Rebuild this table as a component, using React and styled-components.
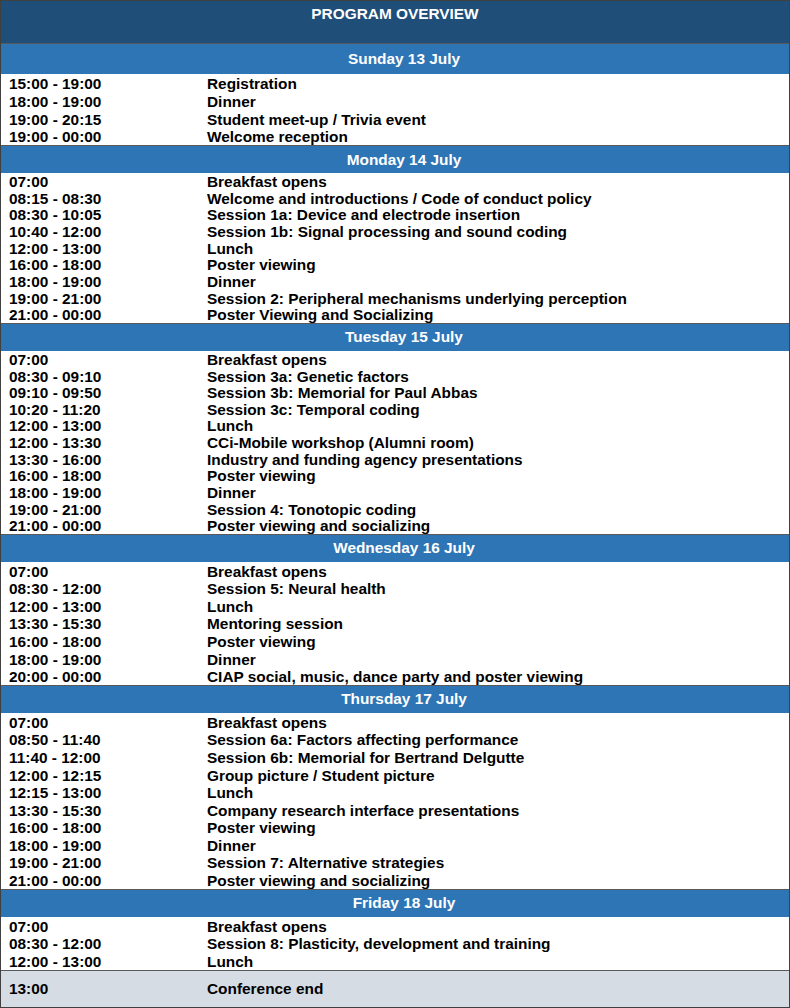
import React from "react";
import styled, { createGlobalStyle } from "styled-components";

const Global = createGlobalStyle`
  html, body { margin: 0; padding: 0; background: #fff; }
  body { font-family: "Liberation Sans", Arial, sans-serif; }
`;

const Table = styled.div`
  width: 790px;
  height: 1008px;
  box-sizing: border-box;
  border: 1px solid #404040;
  display: flex;
  flex-direction: column;
  overflow: hidden;
`;

const Title = styled.div`
  height: 43px;
  flex-shrink: 0;
  box-sizing: border-box;
  background: #1f4e79;
  color: #fff;
  font-weight: bold;
  font-size: 15.4px;
  text-align: center;
  padding-top: 4px;
  line-height: 17px;
  border-bottom: 1px solid #595959;
`;

const DayHeader = styled.div`
  height: ${(p) => p.$h}px;
  background: #2e75b6;
  color: #fff;
  font-weight: bold;
  font-size: 15.4px;
  display: flex;
  align-items: center;
  justify-content: center;
  padding-left: 18px;
  flex-shrink: 0;
`;

const Body = styled.div`
  display: flex;
  flex-direction: column;
  border-bottom: 1px solid #595959;
  flex-shrink: 0;
`;

const Row = styled.div`
  display: grid;
  grid-template-columns: 198px 1fr;
  height: ${(p) => p.$h}px;
  line-height: ${(p) => p.$h + 2}px;
  font-size: 15.4px;
  font-weight: bold;
  color: #000;
  padding-left: 8px;
  white-space: nowrap;
`;

const EndRow = styled(Row)`
  background: #d6dce4;
  flex: 1;
  align-items: center;
  line-height: 18px;
`;

const days = [
  {
    name: "Sunday 13 July",
    hh: 30,
    rh: 17.75,
    items: [
      ["15:00 - 19:00", "Registration"],
      ["18:00 - 19:00", "Dinner"],
      ["19:00 - 20:15", "Student meet-up / Trivia event"],
      ["19:00 - 00:00", "Welcome reception"],
    ],
  },
  {
    name: "Monday 14 July",
    hh: 27,
    rh: 16.67,
    items: [
      ["07:00", "Breakfast opens"],
      ["08:15 - 08:30", "Welcome and introductions / Code of conduct policy"],
      ["08:30 - 10:05", "Session 1a: Device and electrode insertion"],
      ["10:40 - 12:00", "Session 1b: Signal processing and sound coding"],
      ["12:00 - 13:00", "Lunch"],
      ["16:00 - 18:00", "Poster viewing"],
      ["18:00 - 19:00", "Dinner"],
      ["19:00 - 21:00", "Session 2: Peripheral mechanisms underlying perception"],
      ["21:00 - 00:00", "Poster Viewing and Socializing"],
    ],
  },
  {
    name: "Tuesday 15 July",
    hh: 27,
    rh: 16.64,
    items: [
      ["07:00", "Breakfast opens"],
      ["08:30 - 09:10", "Session 3a: Genetic factors"],
      ["09:10 - 09:50", "Session 3b: Memorial for Paul Abbas"],
      ["10:20 - 11:20", "Session 3c: Temporal coding"],
      ["12:00 - 13:00", "Lunch"],
      ["12:00 - 13:30", "CCi-Mobile workshop (Alumni room)"],
      ["13:30 - 16:00", "Industry and funding agency presentations"],
      ["16:00 - 18:00", "Poster viewing"],
      ["18:00 - 19:00", "Dinner"],
      ["19:00 - 21:00", "Session 4: Tonotopic coding"],
      ["21:00 - 00:00", "Poster viewing and socializing"],
    ],
  },
  {
    name: "Wednesday 16 July",
    hh: 27,
    rh: 17.57,
    items: [
      ["07:00", "Breakfast opens"],
      ["08:30 - 12:00", "Session 5: Neural health"],
      ["12:00 - 13:00", "Lunch"],
      ["13:30 - 15:30", "Mentoring session"],
      ["16:00 - 18:00", "Poster viewing"],
      ["18:00 - 19:00", "Dinner"],
      ["20:00 - 00:00", "CIAP social, music, dance party and poster viewing"],
    ],
  },
  {
    name: "Thursday 17 July",
    hh: 27,
    rh: 17.6,
    items: [
      ["07:00", "Breakfast opens"],
      ["08:50 - 11:40", "Session 6a: Factors affecting performance"],
      ["11:40 - 12:00", "Session 6b: Memorial for Bertrand Delgutte"],
      ["12:00 - 12:15", "Group picture / Student picture"],
      ["12:15 - 13:00", "Lunch"],
      ["13:30 - 15:30", "Company research interface presentations"],
      ["16:00 - 18:00", "Poster viewing"],
      ["18:00 - 19:00", "Dinner"],
      ["19:00 - 21:00", "Session 7: Alternative strategies"],
      ["21:00 - 00:00", "Poster viewing and socializing"],
    ],
  },
  {
    name: "Friday 18 July",
    hh: 27,
    rh: 17.67,
    items: [
      ["07:00", "Breakfast opens"],
      ["08:30 - 12:00", "Session 8: Plasticity, development and training"],
      ["12:00 - 13:00", "Lunch"],
    ],
  },
];

export default function App() {
  return (
    <>
      <Global />
      <Table>
        <Title>PROGRAM OVERVIEW</Title>
        {days.map((d) => (
          <React.Fragment key={d.name}>
            <DayHeader $h={d.hh}>{d.name}</DayHeader>
            <Body>
              {d.items.map(([t, e], i) => (
                <Row key={i} $h={d.rh}>
                  <span>{t}</span>
                  <span>{e}</span>
                </Row>
              ))}
            </Body>
          </React.Fragment>
        ))}
        <EndRow $h={35}>
          <span>13:00</span>
          <span>Conference end</span>
        </EndRow>
      </Table>
    </>
  );
}
